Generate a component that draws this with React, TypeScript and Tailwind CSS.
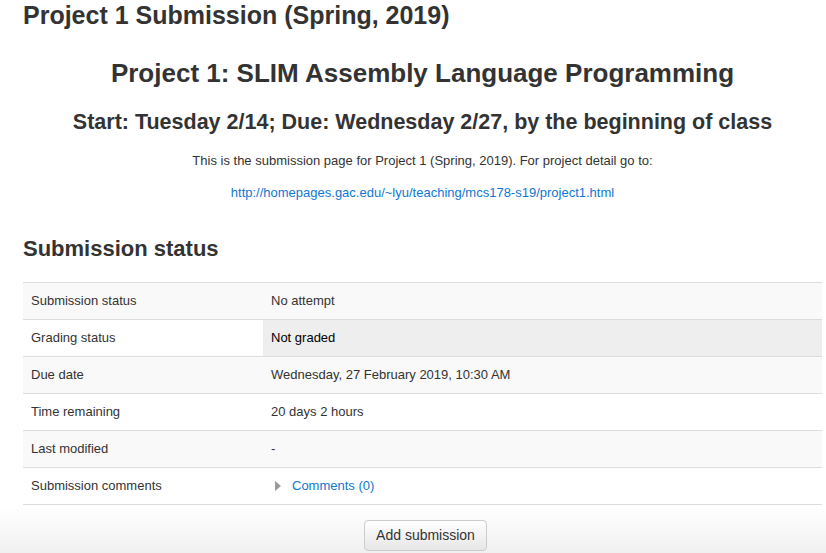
export default function App() {
  const rows: [string, React.ReactNode, string, string][] = [
    ["Submission status", "No attempt", "bg-[#f9f9f9]", ""],
    ["Grading status", "Not graded", "bg-white", "bg-[#eeeeee] text-black"],
    ["Due date", "Wednesday, 27 February 2019, 10:30 AM", "bg-[#f9f9f9]", ""],
    ["Time remaining", "20 days 2 hours", "bg-white", ""],
    ["Last modified", "-", "bg-[#f9f9f9]", ""],
    [
      "Submission comments",
      <span className="flex items-center gap-[11px] pl-[4px]">
        <svg width="6" height="10" viewBox="0 0 6 10">
          <path d="M0 0 L6 5 L0 10 Z" fill="#999" />
        </svg>
        <span className="text-[#1177d1]">Comments (0)</span>
      </span>,
      "bg-white",
      "",
    ],
  ];
  return (
    <div className="w-[826px] h-[553px] overflow-hidden bg-white text-[#333] font-[Liberation_Sans,Arial,sans-serif] relative">
      <div className="pl-[23px] pr-[4px]">
        <h2 className="text-[25px] font-bold leading-[32px] -mt-[1px]">Project 1 Submission (Spring, 2019)</h2>
        <h1 className="text-center text-[26px] font-bold mt-[26px] leading-[32px]">Project 1: SLIM Assembly Language Programming</h1>
        <h3 className="text-center text-[21.5px] font-bold mt-[19px] leading-[28px]">Start: Tuesday 2/14; Due: Wednesday 2/27, by the beginning of class</h3>
        <p className="text-center text-[13px] mt-[16px] leading-[18px]">This is the submission page for Project 1 (Spring, 2019). For project detail go to:</p>
        <p className="text-center text-[13px] mt-[14px] leading-[18px] text-[#1177d1]">http://homepages.gac.edu/~lyu/teaching/mcs178-s19/project1.html</p>
        <h3 className="text-[22px] font-bold mt-[33px] leading-[28px]">Submission status</h3>
        <div className="mt-[19px] border-t border-[#ddd]">
          {rows.map(([k, v, bg, vc], i) => (
            <div key={i} className={`flex h-[37px] border-b border-[#ddd] text-[13px] ${bg}`}>
              <div className="w-[240px] pl-[8px] flex items-center">{k}</div>
              <div className={`flex-1 pl-[8px] flex items-center ${vc}`}>{v}</div>
            </div>
          ))}
        </div>
      </div>
      <div className="absolute left-0 right-0 top-[507px] bottom-0 bg-gradient-to-b from-white to-[#f0f0f0] flex justify-center pt-[13px] pl-[25px]">
        <button className="h-[31px] px-[11px] text-[14px] text-[#333] border border-[#ccc] rounded-[4px] bg-gradient-to-b from-white to-[#e6e6e6]">Add submission</button>
      </div>
    </div>
  );
}
